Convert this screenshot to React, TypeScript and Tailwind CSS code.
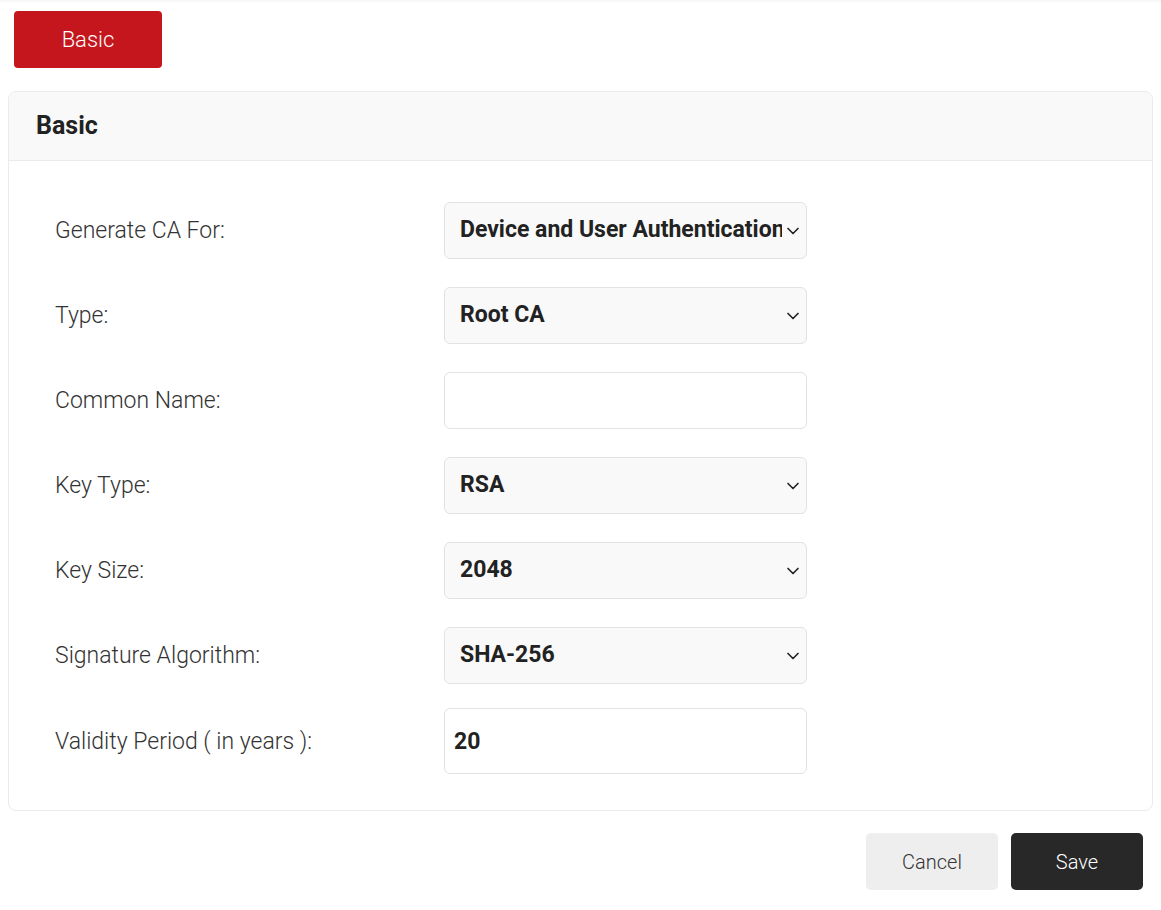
import { ChevronDown } from "lucide-react";

const font = { fontFamily: "Roboto, 'Noto Sans', sans-serif" };

type Row =
  | { label: string; kind: "select"; value: string; options: string[] }
  | { label: string; kind: "input"; value: string; tall?: boolean };

const rows: Row[] = [
  {
    label: "Generate CA For:",
    kind: "select",
    value: "Device and User Authentication",
    options: ["Device and User Authentication", "Device Authentication", "User Authentication"],
  },
  { label: "Type:", kind: "select", value: "Root CA", options: ["Root CA", "Intermediate CA"] },
  { label: "Common Name:", kind: "input", value: "" },
  { label: "Key Type:", kind: "select", value: "RSA", options: ["RSA", "ECDSA"] },
  { label: "Key Size:", kind: "select", value: "2048", options: ["1024", "2048", "4096"] },
  { label: "Signature Algorithm:", kind: "select", value: "SHA-256", options: ["SHA-1", "SHA-256", "SHA-512"] },
  { label: "Validity Period ( in years ):", kind: "input", value: "20", tall: true },
];

function Field({ row }: { row: Row }) {
  if (row.kind === "select") {
    return (
      <div className="relative h-[57px] w-[363px]">
        <select
          defaultValue={row.value}
          className="h-full w-full appearance-none rounded-[6px] border border-[#e2e2e2] bg-[#f9f9f9] pl-[15px] pr-[24px] text-[23px] font-bold text-[#222] outline-none"
          style={font}
        >
          {row.options.map((o) => (
            <option key={o}>{o}</option>
          ))}
        </select>
        <ChevronDown
          className="pointer-events-none absolute right-[4px] top-1/2 h-[20px] w-[20px] -translate-y-1/2 text-[#222]"
          strokeWidth={2}
        />
      </div>
    );
  }
  return (
    <input
      defaultValue={row.value}
      className={`w-[363px] rounded-[6px] border border-[#e2e2e2] bg-white px-[9px] text-[23px] font-bold text-[#222] outline-none ${
        row.tall ? "h-[66px]" : "h-[57px]"
      }`}
      style={font}
    />
  );
}

export default function App() {
  return (
    <div className="min-h-[910px] w-[1161px] bg-white" style={font}>
      <div className="h-[3px] bg-gradient-to-b from-[#f4f4f4] to-white" />
      <div className="px-[14px] pt-[8px]">
        <button
          type="button"
          className="h-[57px] w-[148px] rounded-[4px] bg-[#c4161c] text-[22px] font-light text-white"
        >
          Basic
        </button>
      </div>

      <div className="mx-[8px] mt-[23px] w-[1145px] overflow-hidden rounded-[8px] border border-[#ebebeb]">
        <div className="flex h-[69px] items-center border-b border-[#ebebeb] bg-[#f9f9f9] px-[27px]">
          <h2 className="text-[25px] font-bold text-[#222]">Basic</h2>
        </div>
        <div className="flex flex-col gap-[28px] pb-[36px] pl-[46px] pt-[41px]">
          {rows.map((row) => (
            <div key={row.label} className={`flex items-center ${row.kind === "input" && row.tall ? "-mt-[4px]" : ""}`}>
              <label className="w-[389px] pt-[2px] text-[23px] font-light text-[#333]">{row.label}</label>
              <Field row={row} />
            </div>
          ))}
        </div>
      </div>

      <div className="flex justify-end gap-[13px] pr-[18px] pt-[22px]">
        <button
          type="button"
          className="h-[57px] w-[132px] rounded-[5px] bg-[#eeeeee] text-[20px] font-light text-[#333]"
        >
          Cancel
        </button>
        <button
          type="button"
          className="h-[57px] w-[132px] rounded-[5px] bg-[#282828] text-[20px] font-light text-white"
        >
          Save
        </button>
      </div>
    </div>
  );
}
